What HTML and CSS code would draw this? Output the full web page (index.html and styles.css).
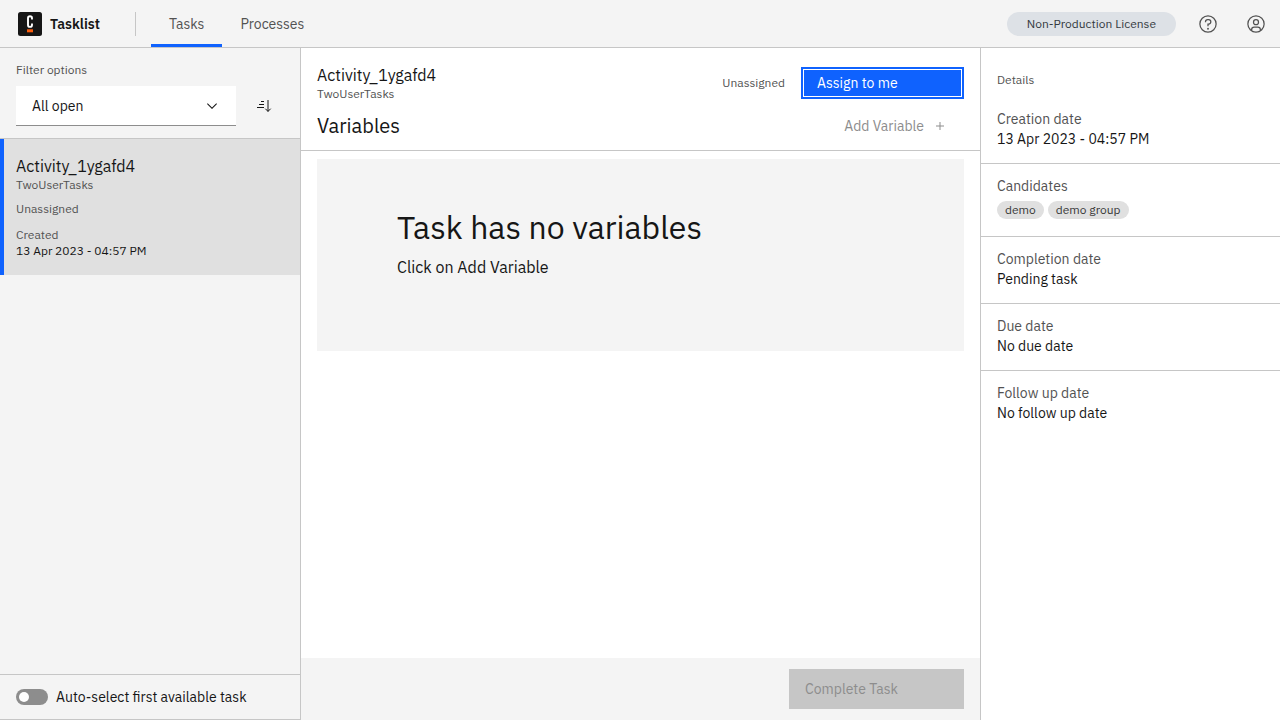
FILE: index.html
```html
<!DOCTYPE html>
<html lang="en">
<head>
<meta charset="utf-8">
<meta name="viewport" content="width=device-width, initial-scale=1">
<title>Tasklist</title>
<link rel="stylesheet" href="styles.css">
</head>
<body>
<header class="header">
  <a class="brand" href="#">
    <svg class="brand-logo" width="24" height="24" viewBox="0 0 24 24" aria-hidden="true">
      <rect width="24" height="24" rx="2.5" fill="#161616"/>
      <path d="M14 7.600V6.200C14 5 13.300 4.300 12 4.300S10 5 10 6.200v6.800c0 1.200.7 1.900 2 1.900s2-.7 2-1.900v-1.600" fill="none" stroke="#fff" stroke-width="1.900"/>
      <rect x="9" y="17.300" width="6" height="3" fill="#fc5d0d"/>
    </svg>
    <span>Tasklist</span>
  </a>
  <nav class="nav" aria-label="Main">
    <a class="nav-link nav-link-active" href="#" aria-current="page">Tasks</a>
    <a class="nav-link" href="#">Processes</a>
  </nav>
  <div class="header-tools">
    <span class="license">Non-Production License</span>
    <button class="header-button" type="button" aria-label="Help">
      <svg width="20" height="20" viewBox="0 0 32 32" fill="currentColor" aria-hidden="true">
        <path d="M16 2a14 14 0 1 0 14 14A14 14 0 0 0 16 2Zm0 26a12 12 0 1 1 12-12A12 12 0 0 1 16 28Z"/>
        <circle cx="16" cy="23.500" r="1.500"/>
        <path d="M17 8h-1.500A4.490 4.490 0 0 0 11 12.500V13h2v-.5A2.500 2.500 0 0 1 15.500 10H17a2.500 2.500 0 0 1 0 5h-2v4.500h2V17a4.500 4.500 0 0 0 0-9Z"/>
      </svg>
    </button>
    <button class="header-button" type="button" aria-label="Account">
      <svg width="20" height="20" viewBox="0 0 32 32" fill="currentColor" aria-hidden="true">
        <path d="M16 8a5 5 0 1 0 5 5 5 5 0 0 0-5-5Zm0 8a3 3 0 1 1 3-3 3 3 0 0 1-3 3Z"/>
        <path d="M16 2a14 14 0 1 0 14 14A14.016 14.016 0 0 0 16 2Zm-6 24.377V25a3.003 3.003 0 0 1 3-3h6a3.003 3.003 0 0 1 3 3v1.377a11.899 11.899 0 0 1-12 0Zm13.993-1.451A5.002 5.002 0 0 0 19 20h-6a5.002 5.002 0 0 0-4.992 4.926 12 12 0 1 1 15.985 0Z"/>
      </svg>
    </button>
  </div>
</header>
<div class="layout">
  <aside class="sidebar">
    <section class="filters">
      <label class="caption" for="filter">Filter options</label>
      <div class="filter-row">
        <div class="dropdown">
          <select class="dropdown-select" id="filter">
            <option>All open</option>
            <option>Assigned to me</option>
            <option>Unassigned</option>
            <option>Completed</option>
          </select>
          <svg class="dropdown-icon" width="16" height="16" viewBox="0 0 16 16" fill="currentColor" aria-hidden="true"><path d="M8 11 3 6l.7-.7L8 9.600l4.300-4.300.7.7z"/></svg>
        </div>
        <button class="sort-button" type="button" aria-label="Sort tasks">
          <svg width="16" height="16" viewBox="0 0 16 16" aria-hidden="true">
            <path d="M5 3.500h3M3 6.500h5M1 9.500h7" fill="none" stroke="#161616"/>
            <path d="M12 2v11.500M9.300 10.700 12 13.400l2.700-2.700" fill="none" stroke="#161616"/>
          </svg>
        </button>
      </div>
    </section>
    <main class="task-list">
      <a class="task" href="#">
        <span class="task-name">Activity_1ygafd4</span>
        <span class="caption">TwoUserTasks</span>
        <span class="caption task-assignee">Unassigned</span>
        <span class="caption task-created">Created</span>
        <time class="task-date">13 Apr 2023 - 04:57 PM</time>
      </a>
    </main>
    <footer class="auto-select">
      <input class="toggle" type="checkbox" role="switch" id="auto">
      <label for="auto">Auto-select first available task</label>
    </footer>
  </aside>
  <section class="content">
    <header class="content-header">
      <div class="title-row">
        <div class="title">
          <h1 class="task-name">Activity_1ygafd4</h1>
          <span class="caption">TwoUserTasks</span>
        </div>
        <span class="caption">Unassigned</span>
        <button class="assign" type="button">Assign to me</button>
      </div>
      <div class="variables-row">
        <h2 class="variables-title">Variables</h2>
        <button class="add-variable" type="button" disabled>
          <span>Add Variable</span>
          <svg width="16" height="16" viewBox="0 0 16 16" aria-hidden="true"><path d="M8 4v8M4 8h8" fill="none" stroke="currentColor"/></svg>
        </button>
      </div>
    </header>
    <div class="variables">
      <div class="empty">
        <h3 class="empty-title">Task has no variables</h3>
        <p class="empty-text">Click on Add Variable</p>
      </div>
    </div>
    <footer class="content-footer">
      <button class="complete" type="button" disabled>Complete Task</button>
    </footer>
  </section>
  <aside class="details">
    <h2 class="caption details-title">Details</h2>
    <dl class="details-list">
      <div class="detail"><dt>Creation date</dt><dd>13 Apr 2023 - 04:57 PM</dd></div>
      <div class="detail"><dt>Candidates</dt><dd class="tags"><span class="tag">demo</span><span class="tag">demo group</span></dd></div>
      <div class="detail"><dt>Completion date</dt><dd>Pending task</dd></div>
      <div class="detail"><dt>Due date</dt><dd>No due date</dd></div>
      <div class="detail"><dt>Follow up date</dt><dd>No follow up date</dd></div>
    </dl>
  </aside>
</div>
</body>
</html>
```
FILE: styles.css
```css
:root {
  --blue: #0f62fe;
  --ink: #161616;
  --ink-soft: #525252;
  --ink-disabled: #8d8d8d;
  --line: #c6c6c6;
  --layer: #f4f4f4;
  --layer-selected: #e0e0e0;
}

* { box-sizing: border-box; }

body {
  margin: 0;
  min-height: 100vh;
  display: flex;
  flex-direction: column;
  color: var(--ink);
  background: #fff;
  font: 14px/20px "IBM Plex Sans", "Noto Sans", sans-serif;
}

h1, h2, h3, p, dl, dd { margin: 0; font-weight: 400; }
a { color: inherit; text-decoration: none; }
button, select { font: inherit; border: 0; border-radius: 0; }

.caption {
  color: var(--ink-soft);
  font-size: 12px;
  line-height: 16px;
}

/* Header */
.header {
  flex: none;
  height: 48px;
  display: flex;
  align-items: center;
  background: var(--layer);
  border-bottom: 1px solid var(--line);
}

.brand {
  width: 136px;
  height: 24px;
  padding-left: 18px;
  display: flex;
  align-items: center;
  gap: 8px;
  font-weight: 600;
  border-right: 1px solid var(--line);
}

.nav {
  align-self: stretch;
  display: flex;
  margin-left: 15px;
}

.nav-link {
  display: flex;
  align-items: center;
  padding: 3px 18px 0;
  color: var(--ink-soft);
  border-bottom: 3px solid transparent;
}

.nav-link-active { border-color: var(--blue); }

.header-tools {
  margin-left: auto;
  display: flex;
  align-items: center;
}

.license {
  margin-right: 8px;
  padding: 4px 20px;
  border-radius: 12px;
  background: #dde1e6;
  color: #343a3f;
  font-size: 12px;
  line-height: 16px;
}

.header-button {
  width: 48px;
  height: 47px;
  padding: 0;
  display: grid;
  place-items: center;
  background: none;
  color: var(--ink-soft);
}

/* Layout */
.layout {
  flex: 1;
  display: grid;
  grid-template-columns: 301px 1fr 300px;
}

/* Sidebar */
.sidebar {
  display: flex;
  flex-direction: column;
  background: var(--layer);
  border-right: 1px solid var(--line);
  border-bottom: 1px solid var(--line);
}

.filters {
  padding: 14px 16px 12px;
  border-bottom: 1px solid var(--line);
}

.filters .caption { display: block; }

.filter-row {
  display: flex;
  gap: 8px;
  margin-top: 8px;
}

.dropdown {
  flex: 1;
  position: relative;
}

.dropdown-select {
  width: 100%;
  height: 40px;
  padding: 0 48px 0 16px;
  appearance: none;
  background: #fff;
  color: var(--ink);
  border-bottom: 1px solid #8d8d8d;
}

.dropdown-icon {
  position: absolute;
  top: 12px;
  right: 16px;
  pointer-events: none;
}

.sort-button {
  width: 40px;
  height: 40px;
  padding: 0;
  display: grid;
  place-items: center;
  background: none;
}

.task-list { flex: 1; }

.task {
  display: flex;
  flex-direction: column;
  padding: 16px 16px 16px 12px;
  background: var(--layer-selected);
  border-left: 4px solid var(--blue);
}

.task-name {
  font-size: 16px;
  line-height: 22px;
}

.task-assignee { margin-top: 8px; }
.task-created { margin-top: 10px; }

.task-date {
  font-size: 12px;
  line-height: 16px;
}

.auto-select {
  display: flex;
  align-items: center;
  gap: 8px;
  padding: 12px 16px;
  border-top: 1px solid var(--line);
}

.toggle {
  appearance: none;
  width: 32px;
  height: 16px;
  margin: 0;
  padding: 3px;
  display: flex;
  border-radius: 8px;
  background: #8d8d8d;
}

.toggle::before {
  content: "";
  width: 10px;
  height: 10px;
  border-radius: 50%;
  background: #fff;
}

.toggle:checked {
  justify-content: flex-end;
  background: #24a148;
}

/* Task content */
.content {
  display: flex;
  flex-direction: column;
}

.content-header {
  padding: 16px 16px 8px;
  border-bottom: 1px solid var(--line);
}

.title-row {
  display: flex;
  align-items: center;
  gap: 16px;
}

.title {
  flex: 1;
  display: flex;
  flex-direction: column;
}

.assign {
  width: 163px;
  height: 32px;
  padding: 0 14px;
  text-align: left;
  color: #fff;
  background: var(--blue);
  border: 2px solid var(--blue);
  box-shadow: inset 0 0 0 1px #fff;
}

.variables-row {
  display: flex;
  align-items: center;
  justify-content: space-between;
  margin-top: 8px;
}

.variables-title {
  font-size: 20px;
  line-height: 28px;
}

.add-variable {
  height: 32px;
  padding: 0 16px;
  display: flex;
  align-items: center;
  gap: 8px;
  background: none;
  color: var(--ink-disabled);
}

.variables {
  flex: 1;
  padding: 8px 16px;
}

.empty {
  padding: 48px 80px 72px;
  background: var(--layer);
}

.empty-title {
  font-size: 32px;
  line-height: 40px;
}

.empty-text {
  margin-top: 8px;
  font-size: 16px;
  line-height: 24px;
}

.content-footer {
  display: flex;
  justify-content: flex-end;
  padding: 11px 16px;
  background: var(--layer);
}

.complete {
  width: 175px;
  height: 40px;
  padding: 0 16px;
  text-align: left;
  background: var(--line);
  color: var(--ink-disabled);
}

/* Details */
.details { border-left: 1px solid var(--line); }

.details-title { padding: 24px 16px 9px; }

.detail {
  padding: 12px 16px 14px;
  border-bottom: 1px solid var(--line);
}

.detail:last-child { border-bottom: 0; }
.detail dt { color: var(--ink-soft); }

.detail .tags {
  display: flex;
  gap: 4px;
  padding: 5px 0 3px;
}

.tag {
  padding: 1px 8px;
  border-radius: 9px;
  background: #e0e0e0;
  color: #393939;
  font-size: 12px;
  line-height: 16px;
}
```
